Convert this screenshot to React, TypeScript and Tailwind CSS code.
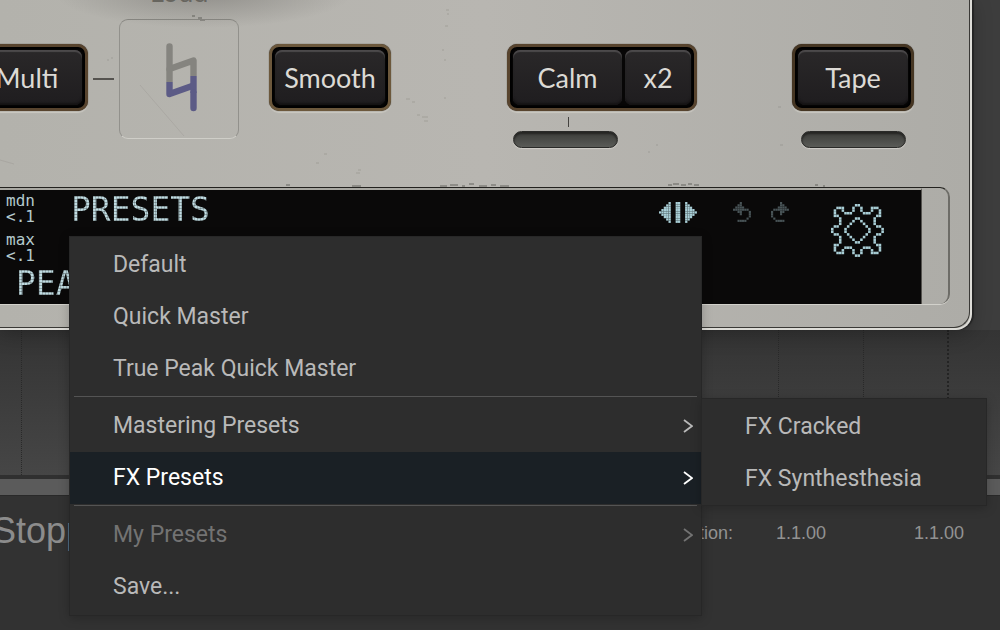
import type { ReactNode } from 'react';

const BUTTON_FACE =
  "h-full w-full rounded-[7px] bg-linear-to-b from-[#2a2829] to-[#1f1d1f] font-['Lato',sans-serif] text-[27px] leading-none text-[#dcdad5] shadow-[inset_0_2px_1px_#4c4a4b,inset_0_-2px_2px_#151314]";

function KeyFrame({ children, className }: { children: ReactNode; className: string }) {
  return (
    <div
      className={`flex h-[67px] shrink-0 gap-[3px] rounded-[10px] border-[3px] bg-[#070606] p-[3px] shadow-[inset_0_0_2px_2px_#000000,0_0_1px_#1b1712,0_2px_1px_#cbc9c2] ${className}`}
    >
      {children}
    </div>
  );
}

function Led() {
  return (
    <div className="h-[17px] w-[105px] rounded-full border border-[#2a2a28] bg-linear-to-b from-[#3b3c39] to-[#5a5b57] shadow-[inset_0_2px_2px_#252523,0_1px_1px_#d0cec8]" />
  );
}

function NaturalLogo() {
  return (
    <svg viewBox="0 0 31 72" className="h-[72px] w-[31px]" aria-hidden="true">
      <g fill="none" strokeWidth="6.4" strokeLinejoin="round">
        <path d="M3.5 39V26L27.5 17.5V33" stroke="#85847f" />
        <path d="M3.5 26V3.5" stroke="#85847f" strokeLinecap="round" />
        <path d="M3.5 39V51L27.5 42.5" stroke="#5c5b86" />
        <path d="M27.5 33V50" stroke="#5c5b86" />
        <path d="M27.5 50V65" stroke="#5c5b86" strokeLinecap="round" />
      </g>
    </svg>
  );
}

type Dot = [number, number];

const GEAR_QUADRANT: Dot[] = [
  [0, 9], [1, 8], [1, 7], [2, 6], [3, 6], [4, 6], [5, 7], [5, 8], [6, 8], [7, 8],
  [8, 7], [8, 6], [8, 5], [7, 5], [6, 4], [6, 3], [6, 2], [7, 1], [8, 1], [9, 0],
  [0, 4], [1, 3], [2, 2], [3, 1], [4, 0],
];

const GEAR: Dot[] = GEAR_QUADRANT.flatMap(([x, y]): Dot[] => [
  [10 + x, 10 + y],
  [9 - x, 10 + y],
  [10 + x, 9 - y],
  [9 - x, 9 - y],
]);

const fromRows = (rows: string[]): Dot[] =>
  rows.flatMap((row, y) => [...row].flatMap((c, x): Dot[] => (c === '#' ? [[x, y]] : [])));

const COMPARE = fromRows([
  '....#..##..#....',
  '...##..##..##...',
  '..###..##..###..',
  '.####..##..####.',
  '#####..##..#####',
  '.####..##..####.',
  '..###..##..###..',
  '...##..##..##...',
  '....#..##..#....',
]);

const UNDO_ROWS = [
  '...#....',
  '..##....',
  '.####...',
  '#######.',
  '..##...#',
  '...#...#',
  '.......#',
  '......#.',
  '..####..',
];
const UNDO = fromRows(UNDO_ROWS);
const REDO = fromRows(UNDO_ROWS.map((row) => [...row].reverse().join('')));

function DotIcon({ dots, cols, rows, className }: { dots: Dot[]; cols: number; rows: number; className: string }) {
  return (
    <svg viewBox={`0 0 ${cols} ${rows}`} preserveAspectRatio="none" className={className} fill="currentColor" aria-hidden="true">
      {dots.map(([x, y], i) => (
        <rect key={i} x={x} y={y} width="0.96" height="0.96" />
      ))}
    </svg>
  );
}

const LCD_TEXT =
  "bg-[#c0dce2] bg-[repeating-linear-gradient(0deg,#0a0a0a44_0_1px,transparent_1px_3px),repeating-linear-gradient(90deg,#0a0a0a33_0_1px,transparent_1px_3px)] bg-clip-text font-['DejaVu_Sans_Mono',monospace] text-[33px] leading-[34px] text-transparent";
const LCD_SMALL = "font-['DejaVu_Sans_Mono',monospace] text-[16px] leading-4 text-[#b4c9cd]";

function Chevron() {
  return (
    <svg viewBox="0 0 10 16" className="h-4 w-[10px]" fill="none" stroke="currentColor" strokeWidth="1.8" aria-hidden="true">
      <path d="M1 2L9 8L1 14" />
    </svg>
  );
}

function MenuItem({ label, submenu, active, disabled }: { label: string; submenu?: boolean; active?: boolean; disabled?: boolean }) {
  const tone = active ? 'bg-[#1a2025] text-white' : disabled ? 'text-[#737373]' : 'text-[#b9b9b9]';
  return (
    <button
      type="button"
      role="menuitem"
      disabled={disabled}
      aria-haspopup={submenu ? 'menu' : undefined}
      className={`flex h-[52px] w-full items-center justify-between pr-2 pl-[43px] text-left ${tone}`}
    >
      <span>{label}</span>
      {submenu && <Chevron />}
    </button>
  );
}

function Separator() {
  return (
    <div role="separator" className="h-[5px] px-1 pt-px">
      <div className="h-px w-full bg-[#545454]" />
    </div>
  );
}

const MENU_PANEL =
  "border border-[#272727] bg-[#2d2d2d] pt-0.5 font-['Roboto',sans-serif] text-[23px] leading-7 shadow-[0_2px_10px_#00000038]";

function Wear() {
  return (
    <svg className="absolute inset-0 h-full w-full text-[#4a4843]" fill="none" stroke="currentColor" aria-hidden="true">
      <path d="M192 16h3m3 2h4m-2 2h5M440 186h7m3-1h8m4 1h3m4-2h5m5 2h8m4-1h5m4 1h9M352 186h9M286 185h4M668 185h4m1-1h6m2 1h5m2-1h4m2 1h5M815 185h3m5 1h2" opacity="0.75" />
      <path d="M107 60h2m2-2h2M446 10h3m-2 4h2m-4 12h3M442 50h2m0 10h2m-2 38h2M422 117h6m-4 4h4m-11-6h3M406 99h4m2 3h3M356 173h4m-2-3h3M316 163h3M324 154h3M648 152h2M656 145h2M778 107h3m-1 38h3" opacity="0.2" />
      <path d="M140 85L184 136M0 160l14 4" opacity="0.1" />
    </svg>
  );
}

function Plate() {
  return (
    <section className="relative mr-7 h-[330px] overflow-hidden rounded-br-2xl border-r-2 border-b-2 border-[#dddcd7] bg-[#b6b4ae] bg-[radial-gradient(ellipse_150px_36px_at_21%_-8px,#77757199,transparent),linear-gradient(90deg,#b3b2ac,#b8b6b1_50%,#adaca7)] shadow-[0_4px_20px_#00000040,2px_0_1px_#282828]">
      <Wear />
      <div className="pointer-events-none absolute inset-0 rounded-br-2xl border-r border-b border-[#3a3936]" />
      <p className="absolute -top-6 left-[150px] font-['Lato',sans-serif] text-[27px] leading-8 text-[#67655f]">Loud</p>

      <div className="relative flex h-[187px] items-start pt-11">
        <div className="flex flex-1 items-start">
          <KeyFrame className="-ml-[34px] w-[122px] border-[#58442e]">
            <button type="button" className={BUTTON_FACE}>Multi</button>
          </KeyFrame>
          <div className="mx-[5px] mt-[34px] h-[2px] w-[21px] shrink-0 bg-[#55534f]" />
          <button
            type="button"
            aria-label="Natural mode"
            className="-mt-[25px] flex h-[120px] w-[120px] shrink-0 items-center justify-center rounded-[9px] border border-t-[#85847f] border-r-[#92918c] border-b-[#cfcec8] border-l-[#92918c] pl-1"
          >
            <NaturalLogo />
          </button>
          <KeyFrame className="ml-[30px] w-[122px] border-[#6c583c]">
            <button type="button" className={BUTTON_FACE}>Smooth</button>
          </KeyFrame>
        </div>
        <div className="mr-[95px] flex flex-col">
          <KeyFrame className="w-[190px] border-[#58442e]">
            <button type="button" className={BUTTON_FACE}>Calm</button>
            <div className="h-full w-[66px] shrink-0">
              <button type="button" className={BUTTON_FACE}>x2</button>
            </div>
          </KeyFrame>
          <div className="flex flex-col pl-1.5">
            <div className="mt-1.5 mb-1 ml-[55px] h-[10px] w-px bg-[#44423f]" />
            <Led />
          </div>
        </div>
        <div className="mr-14 flex flex-col items-center gap-5">
          <KeyFrame className="w-[122px] border-[#463623]">
            <button type="button" className={BUTTON_FACE}>Tape</button>
          </KeyFrame>
          <Led />
        </div>
      </div>

      <div className="relative mr-5 h-[117px] rounded-r-[10px] border-t border-r-2 border-[#6d6c67] border-t-[#23221f] pr-[26px] shadow-[0_1px_0_#d2d1cb]">
        <div className="flex h-full justify-between border-t-2 border-r border-t-[#a9a8a2] border-r-[#55534f] bg-[#0a0909] pl-[6px]">
          <div className="pt-[3px]">
            <div className="flex items-start gap-9">
              <div className="flex flex-col gap-[7px]">
                <p className={LCD_SMALL}>mdn<br />&lt;.1</p>
                <p className={LCD_SMALL}>max<br />&lt;.1</p>
              </div>
              <p className={LCD_TEXT}>PRESETS</p>
            </div>
            <p className={`mt-[3px] pl-[10px] ${LCD_TEXT}`}>PEAK</p>
          </div>
          <div className="flex items-start pr-[37px] text-[#a9ced6]">
            <button type="button" aria-label="Compare" className="mt-3">
              <DotIcon dots={COMPARE} cols={16} rows={9} className="h-[21px] w-[38px]" />
            </button>
            <button type="button" aria-label="Undo" className="mt-3 ml-9 text-[#485356]">
              <DotIcon dots={UNDO} cols={8} rows={9} className="h-5 w-[18px]" />
            </button>
            <button type="button" aria-label="Redo" className="mt-3 ml-5 text-[#485356]">
              <DotIcon dots={REDO} cols={8} rows={9} className="h-5 w-[18px]" />
            </button>
            <button type="button" aria-label="Settings" className="mt-3.5 ml-[42px]">
              <DotIcon dots={GEAR} cols={20} rows={20} className="h-[53px] w-[53px]" />
            </button>
          </div>
        </div>
      </div>
    </section>
  );
}

export default function App() {
  return (
    <main className="relative min-h-screen overflow-hidden bg-[#3d3d3d]">
      <Plate />

      <section className="flex h-[145px] justify-between bg-linear-to-b from-[#343434] to-[#464646]">
        <div className="w-[22px] border-r border-dotted border-[#292929]" />
        <div className="flex">
          <div className="w-[85px] border-l border-dotted border-[#292929]" />
          <div className="w-[84px] border-l border-dotted border-[#292929]" />
          <div className="w-[53px] border-l-2 border-dotted border-[#242424]" />
        </div>
      </section>
      <div className="h-[21px] border-t-4 border-b border-t-[#303030] border-b-[#292929] bg-[#5b5b5b]" />

      <footer className="flex min-h-[134px] items-start justify-between bg-[#323232] pt-[14px] font-['Liberation_Sans',Arial,sans-serif] text-[#8c8c8c]">
        <p className="-ml-2 text-[36px] leading-[42px]">Stopped</p>
        <div className="flex pt-3 pr-9 text-[18px] leading-[22px] text-[#929292]">
          <span>Position:</span>
          <span className="ml-[43px]">1.1.00</span>
          <span className="ml-[88px]">1.1.00</span>
        </div>
      </footer>

      <div role="menu" aria-label="Presets" className={`absolute top-[236px] left-[69px] w-[633px] pb-0.5 ${MENU_PANEL}`}>
        <MenuItem label="Default" />
        <MenuItem label="Quick Master" />
        <MenuItem label="True Peak Quick Master" />
        <Separator />
        <MenuItem label="Mastering Presets" submenu />
        <MenuItem label="FX Presets" submenu active />
        <Separator />
        <MenuItem label="My Presets" submenu disabled />
        <MenuItem label="Save..." />
      </div>

      <div role="menu" aria-label="FX Presets" className={`absolute top-[398px] left-[701px] w-[286px] ${MENU_PANEL}`}>
        <MenuItem label="FX Cracked" />
        <MenuItem label="FX Synthesthesia" />
      </div>
    </main>
  );
}
